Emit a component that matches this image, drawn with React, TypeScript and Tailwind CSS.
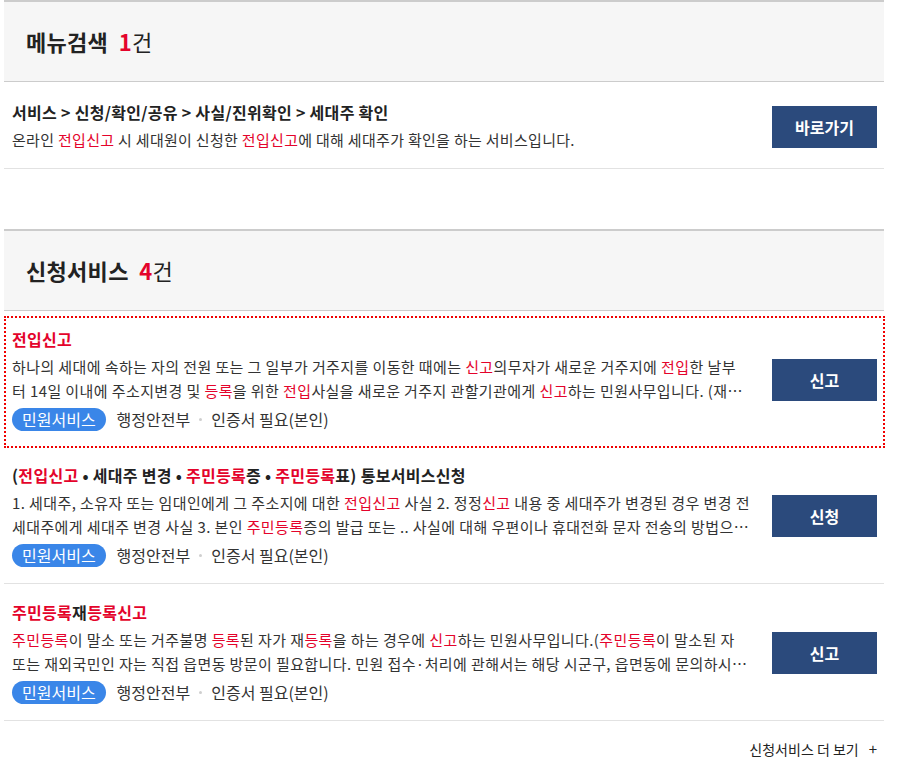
import React from 'react';

type Seg = string | { r: string };

interface ServiceItem {
  title: Seg[];
  desc: Seg[];
  button: string;
  focused?: boolean;
  wide?: boolean;
}

const R = (t: string) => ({ r: t });

function Rich({ segs }: { segs: Seg[] }) {
  return (
    <>
      {segs.map((s, i) =>
        typeof s === 'string' ? (
          <span key={i}>{s}</span>
        ) : (
          <span key={i} className="text-[#e4032b]">
            {s.r}
          </span>
        )
      )}
    </>
  );
}

const items: ServiceItem[] = [
  {
    title: [R('전입신고')],
    desc: [
      '하나의 세대에 속하는 자의 전원 또는 그 일부가 거주지를 이동한 때에는 ',
      R('신고'),
      '의무자가 새로운 거주지에 ',
      R('전입'),
      '한 날부터 14일 이내에 주소지변경 및 ',
      R('등록'),
      '을 위한 ',
      R('전입'),
      '사실을 새로운 거주지 관할기관에게 ',
      R('신고'),
      '하는 민원사무입니다. (재외국민 및 해외이주자 포함) 거주지 이동 후 14일 이내 신고',
    ],
    button: '신고',
    focused: true,
  },
  {
    title: ['(', R('전입신고'), ' • 세대주 변경 • ', R('주민등록'), '증 • ', R('주민등록'), '표) 통보서비스신청'],
    desc: [
      '1. 세대주, 소유자 또는 임대인에게 그 주소지에 대한 ',
      R('전입신고'),
      ' 사실 2. 정정',
      R('신고'),
      ' 내용 중 세대주가 변경된 경우 변경 전 세대주에게 세대주 변경 사실 3. 본인 ',
      R('주민등록'),
      '증의 발급 또는 .. 사실에 대해 우편이나 휴대전화 문자 전송의 방법으로 통보받을 수 있도록 신청하는 서비스',
    ],
    button: '신청',
    wide: true,
  },
  {
    title: [R('주민등록'), '재', R('등록'), R('신고')],
    desc: [
      R('주민등록'),
      '이 말소 또는 거주불명 ',
      R('등록'),
      '된 자가 재',
      R('등록'),
      '을 하는 경우에 ',
      R('신고'),
      '하는 민원사무입니다.(',
      R('주민등록'),
      '이 말소된 자 또는 재외국민인 자는 직접 읍면동 방문이 필요합니다. 민원 접수·처리에 관해서는 해당 시군구, 읍면동에 문의하시기 바랍니다.)',
    ],
    button: '신고',
  },
];

function SectionHeader({ label, count }: { label: string; count: number }) {
  return (
    <div className="h-[82px] border-t-2 border-b border-[#cccccc] bg-[#f6f6f6] pl-[22px] flex items-center">
      <h2 className="text-[22px] font-bold text-[#222] tracking-[0.3px]">
        {label}&nbsp; <span className="text-[#e4032b]">{count}</span>
        <span className="font-normal">건</span>
      </h2>
    </div>
  );
}

function NavyButton({ children }: { children: React.ReactNode }) {
  return (
    <button className="w-[105px] h-[42px] bg-[#2b4a7c] text-white text-[16px] font-bold shrink-0">
      {children}
    </button>
  );
}

export default function App() {
  return (
    <div
      className="w-[901px] min-h-[766px] bg-white pl-[4px] pr-[17px] text-[#333]"
      style={{ fontFamily: '"Noto Sans CJK KR", "Noto Sans", sans-serif' }}
    >
      {/* 메뉴검색 */}
      <section>
        <SectionHeader label="메뉴검색" count={1} />
        <div className="flex items-center justify-between pl-2 pr-[7px] pt-5 pb-4 border-b border-[#e2e2e2]">
          <div>
            <p className="text-[16px] font-bold leading-5 text-[#222] tracking-[0.3px]">
              서비스 &gt; 신청/확인/공유 &gt; 사실/진위확인 &gt; 세대주 확인
            </p>
            <p className="mt-[6px] text-[15px] leading-6 tracking-[0.3px]">
              온라인 <span className="text-[#e4032b]">전입신고</span> 시 세대원이 신청한{' '}
              <span className="text-[#e4032b]">전입신고</span>에 대해 세대주가 확인을 하는 서비스입니다.
            </p>
          </div>
          <NavyButton>바로가기</NavyButton>
        </div>
      </section>

      {/* 신청서비스 */}
      <section className="mt-[60px]">
        <SectionHeader label="신청서비스" count={4} />
        <ul>
          {items.map((item, idx) => (
            <li
              key={idx}
              className={`relative flex items-center justify-between pl-2 pr-[7px] pt-[18px] pb-[16px] ${
                item.focused ? '' : 'border-b border-[#e2e2e2]'
              }`}
            >
              {item.focused && (
                <div className="absolute top-[5px] left-0 -right-px -bottom-px border-2 border-dotted border-[#f00000] pointer-events-none" />
              )}
              <div className={item.wide ? 'w-[742px]' : 'w-[736px]'}>
                <p className="text-[16px] font-bold leading-5 text-[#222] tracking-[0.3px]">
                  <Rich segs={item.title} />
                </p>
                <p className="mt-[6px] text-[15px] leading-6 line-clamp-2 tracking-[0.4px]">
                  <Rich segs={item.desc} />
                </p>
                <div className="mt-[5px] flex items-center text-[16px] leading-[23px]">
                  <span className="rounded-full bg-[#3a86e8] text-white px-[10px] h-[23px] inline-flex items-center">
                    민원서비스
                  </span>
                  <span className="ml-[11px]">행정안전부</span>
                  <span className="mx-[9px] w-[3px] h-[3px] rounded-full bg-[#cfcfcf]" />
                  <span>인증서 필요(본인)</span>
                </div>
              </div>
              <NavyButton>{item.button}</NavyButton>
            </li>
          ))}
        </ul>
        <div className="flex justify-end pr-[7px] pt-[17px]">
          <a className="text-[14px] text-[#222] flex items-center gap-[10px]">
            신청서비스 더 보기 <span className="text-[15px]">+</span>
          </a>
        </div>
      </section>
    </div>
  );
}
